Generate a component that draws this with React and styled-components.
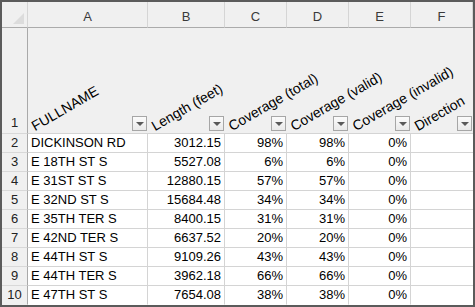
import React from 'react'
import styled, { createGlobalStyle } from 'styled-components'

const COLUMNS = [
  { letter: 'A', width: 120, title: 'FULLNAME', align: 'left' },
  { letter: 'B', width: 77, title: 'Length (feet)', align: 'right' },
  { letter: 'C', width: 62, title: 'Coverage (total)', align: 'right' },
  { letter: 'D', width: 62, title: 'Coverage (valid)', align: 'right' },
  { letter: 'E', width: 62, title: 'Coverage (invalid)', align: 'right' },
  { letter: 'F', width: 62, title: 'Direction', align: 'right' },
]

const ROWS = [
  ['DICKINSON RD', '3012.15', '98%', '98%', '0%', ''],
  ['E 18TH ST S', '5527.08', '6%', '6%', '0%', ''],
  ['E 31ST ST S', '12880.15', '57%', '57%', '0%', ''],
  ['E 32ND ST S', '15684.48', '34%', '34%', '0%', ''],
  ['E 35TH TER S', '8400.15', '31%', '31%', '0%', ''],
  ['E 42ND TER S', '6637.52', '20%', '20%', '0%', ''],
  ['E 44TH ST S', '9109.26', '43%', '43%', '0%', ''],
  ['E 44TH TER S', '3962.18', '66%', '66%', '0%', ''],
  ['E 47TH ST S', '7654.08', '38%', '38%', '0%', ''],
]

const TEMPLATE = `26px ${COLUMNS.map(c => `${c.width}px`).join(' ')}`

const GlobalStyle = createGlobalStyle`
  html, body {
    margin: 0;
    padding: 0;
    background: #ffffff;
  }
  body {
    font-family: "Liberation Sans", Arial, sans-serif;
    font-size: 13px;
    color: #000000;
  }
`

const Sheet = styled.div`
  width: 471px;
  border: 2px solid #5b5b5b;
  background: #ffffff;
  overflow: hidden;
`

const Row = styled.div`
  display: grid;
  grid-template-columns: ${TEMPLATE};
  height: ${props => props.height}px;
`

const Corner = styled.div`
  background: #f0f0f0;
  border-right: 1px solid #d5d5d5;
  border-bottom: 1px solid #ababab;
  display: flex;
  align-items: flex-end;
  justify-content: flex-end;
  padding: 0 3px 3px 0;

  &::after {
    content: '';
    width: 0;
    height: 0;
    border-left: 11px solid transparent;
    border-bottom: 11px solid #dcdcdc;
  }
`

const ColLetter = styled.div`
  background: #f0f0f0;
  border-right: 1px solid #d5d5d5;
  border-bottom: 1px solid #ababab;
  color: #3a3a3a;
  display: flex;
  align-items: center;
  justify-content: center;
  padding-top: 3px;
`

const RowNumber = styled.div`
  background: #f0f0f0;
  border-right: 1px solid #a9a9a9;
  border-bottom: 1px solid ${props => (props.last ? '#f0f0f0' : '#d8d8d8')};
  color: #222222;
  display: flex;
  align-items: flex-end;
  justify-content: center;
  padding-bottom: ${props => (props.title ? 3 : 2)}px;
  line-height: 15px;
`

const TitleCell = styled.div`
  background: #f0f0f0;
  border-bottom: 1px solid #d4d4d4;
  display: flex;
  align-items: flex-end;
  padding: 0 1px 2px 8px;
  overflow: visible;
`

const TitleLabel = styled.span`
  width: 0;
  margin-right: auto;
  margin-bottom: -2px;
  white-space: nowrap;
  font-size: 14px;
  line-height: 14px;
  transform-origin: 0 100%;
  transform: rotate(-30deg);
  position: relative;
  z-index: 1;
`

const FilterButton = styled.div`
  width: 13px;
  height: 13px;
  border: 1px solid #a6a6a6;
  background: linear-gradient(#fbfbfb, #e9e9e9);
  display: flex;
  align-items: center;
  justify-content: center;

  &::after {
    content: '';
    width: 0;
    height: 0;
    border-left: 4px solid transparent;
    border-right: 4px solid transparent;
    border-top: 4px solid #595959;
    margin-top: 1px;
  }
`

const Cell = styled.div`
  background: #ffffff;
  border-right: 1px solid #d4d4d4;
  border-bottom: 1px solid ${props => (props.last ? '#ffffff' : '#d4d4d4')};
  display: flex;
  align-items: flex-end;
  justify-content: ${props => (props.align === 'left' ? 'flex-start' : 'flex-end')};
  padding: 0 ${props => (props.align === 'left' ? 0 : 3)}px 2px ${props => (props.align === 'left' ? 3 : 0)}px;
  line-height: 15px;
  white-space: nowrap;
  overflow: hidden;
  &:last-child {
    border-right: none;
  }
`

const App = () => (
  <>
    <GlobalStyle />
    <Sheet>
      <Row height={26}>
        <Corner />
        {COLUMNS.map(col => (
          <ColLetter key={col.letter}>{col.letter}</ColLetter>
        ))}
      </Row>
      <Row height={106}>
        <RowNumber title="1">1</RowNumber>
        {COLUMNS.map(col => (
          <TitleCell key={col.letter}>
            <TitleLabel>{col.title}</TitleLabel>
            <FilterButton />
          </TitleCell>
        ))}
      </Row>
      {ROWS.map((row, i) => (
        <Row key={row[0]} height={19}>
          <RowNumber last={i === ROWS.length - 1}>{i + 2}</RowNumber>
          {row.map((value, j) => (
            <Cell key={COLUMNS[j].letter} align={COLUMNS[j].align} last={i === ROWS.length - 1}>
              {value}
            </Cell>
          ))}
        </Row>
      ))}
    </Sheet>
  </>
)

export default App
